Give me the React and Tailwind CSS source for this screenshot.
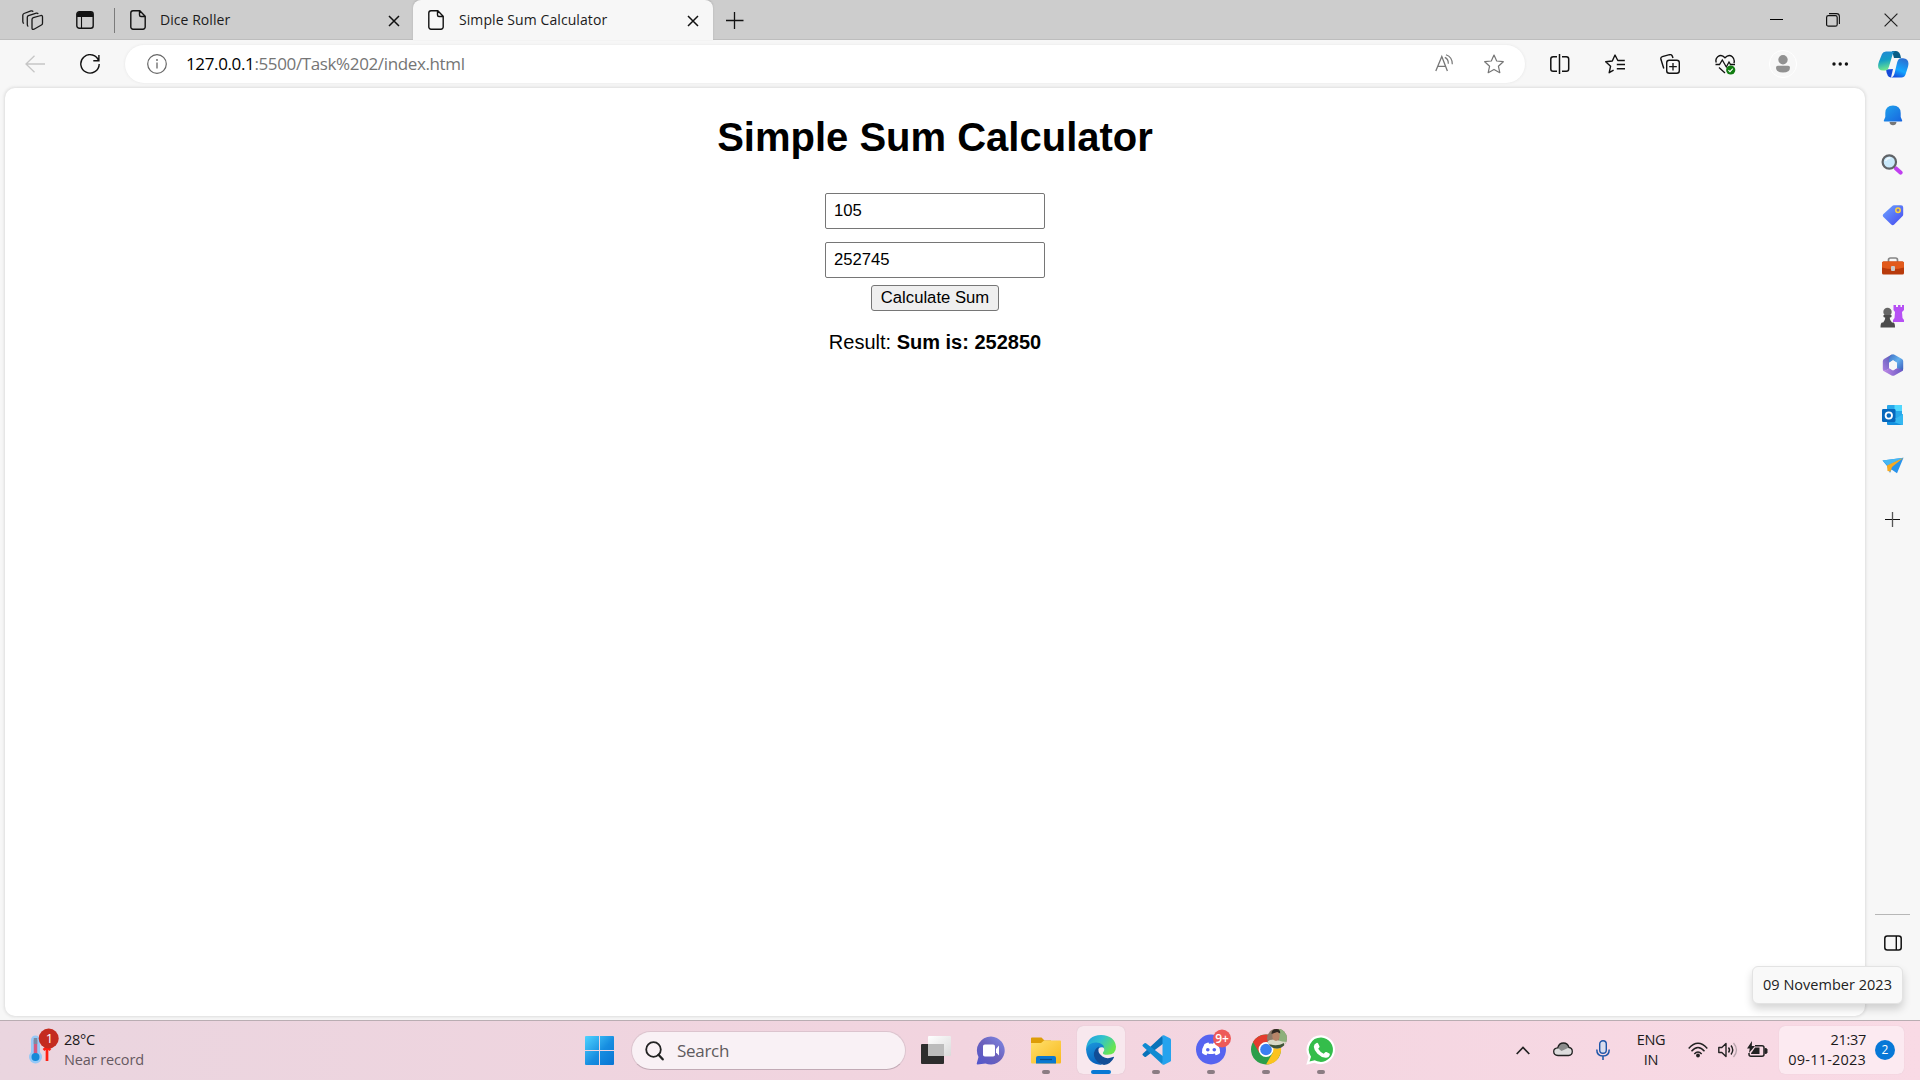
import React from "react";

/* An icon whose drawing space starts at (x, y) and is w by h pixels. */
function Icon({ box, className = "", children }) {
  const [, , w, h] = box.split(" ");
  return (
    <svg
      viewBox={box}
      width={w}
      height={h}
      fill="none"
      stroke="none"
      className={"block shrink-0 " + className}
    >
      {children}
    </svg>
  );
}

const ui = "font-['Open_Sans','Noto_Sans',sans-serif]";

function DocIcon({ className }) {
  return (
    <Icon box="0 0 16 20" className={className}>
      <path
        d="M3 .8h6.8L15.2 6.200V17a2.200 2.200 0 0 1-2.200 2.200H3A2.200 2.200 0 0 1 .8 17V3A2.200 2.200 0 0 1 3 .8zM9.500 1v4a1.500 1.500 0 0 0 1.500 1.500h4"
        stroke="#111"
        strokeWidth="1.4"
      />
    </Icon>
  );
}

function CloseIcon({ className }) {
  return (
    <Icon box="0 0 12 12" className={className}>
      <path d="M1 1l10 10M11 1L1 11" stroke="#111" strokeWidth="1.5" />
    </Icon>
  );
}

function TabBar() {
  return (
    <div className={"flex h-10 w-full shrink-0 items-center bg-[#cdcdcd] shadow-[inset_0_-1px_0_#bdbdbd] " + ui}>
      <Icon box="0 0 22 20" className="ml-[22px]">
        <g stroke="#1a1a1a" strokeWidth="1.3" strokeLinejoin="round">
          <path d="M11.300 7.700l7.700-2.200q1.500-.3 1.500 1.300v6.500q0 1.200-1.100 1.700l-7.400 4.200q-2 .8-2-.9V9.500q0-1.300 1.300-1.800z" />
          <path d="M6.300 16.500q-1-.5-1-2V7.300q0-1.300 1.200-1.700l7.800-2.500q1.300-.3 1.900.8" />
          <path d="M2 13.500q-1.200-.4-1.200-2V5.200Q.8 4 2 3.500L9 .9q1.500-.4 2.200.7" />
        </g>
      </Icon>
      <Icon box="0 0 18 18" className="ml-8">
        <rect x=".8" y=".8" width="16.400" height="16.400" rx="2.500" stroke="#111" strokeWidth="1.4" />
        <path d="M1 6V3.200Q1 1 3.200 1h11.600Q17 1 17 3.200V6z" fill="#111" />
        <path d="M5.500 6v11" stroke="#111" strokeWidth="1.1" />
      </Icon>
      <div className="ml-5 h-[25px] w-px bg-[#7b7b7b]" />
      <DocIcon className="ml-[15px]" />
      <span className="mb-[2px] ml-[14px] w-[228px] text-[14px] tracking-[0.05px] whitespace-nowrap text-[#1b1b1b]">
        Dice Roller
      </span>
      <CloseIcon className="mt-[1px]" />
      <div className="ml-[13px] flex h-10 w-[300px] items-center rounded-t-lg bg-[#f7f7f7] shadow-[0_-1px_2px_#b0b0b0]">
        <DocIcon className="ml-[15px]" />
        <span className="mb-[2px] ml-[15px] w-[228px] text-[14px] tracking-[0.08px] whitespace-nowrap text-[#1b1b1b]">
          Simple Sum Calculator
        </span>
        <CloseIcon className="mt-[1px]" />
      </div>
      <Icon box="0 0 18 18" className="mb-px ml-[13px]">
        <path d="M0 9.500h17.500M8.500 1v17" stroke="#111" strokeWidth="1.3" />
      </Icon>
      <div className="mb-px ml-auto flex items-center pr-[22px]">
        <div className="mr-[43px] h-px w-[13px] bg-black" />
        <Icon box="0 0 14 14">
          <rect x=".6" y="2.600" width="10.600" height="10.600" rx="1.800" stroke="#111" strokeWidth="1.2" />
          <path d="M3 .6h7.500a2.900 2.900 0 0 1 2.900 2.900V11" stroke="#111" strokeWidth="1.1" />
        </Icon>
        <Icon box="0 0 14 14" className="ml-11">
          <path d="M.6.6l12.800 12.800M13.400.6L.6 13.400" stroke="#222" strokeWidth="1.2" />
        </Icon>
      </div>
    </div>
  );
}

const star = "M10 1l2.700 6 6.600.7-4.900 4.500 1.400 6.500L10 15.400l-5.800 3.300 1.400-6.500L.7 7.700 7.300 7z";

function Toolbar() {
  return (
    <div className={"flex h-12 w-full shrink-0 items-center " + ui}>
      <Icon box="0 0 20 18" className="mb-px ml-[25px]">
        <path d="M9.500.8L1 9l8.500 8.200M1 9h19" stroke="#c6c6c6" strokeWidth="1.3" />
      </Icon>
      <Icon box="0 0 20 20" className="ml-[35px]">
        <path d="M18.800 7.200A9.200 9.200 0 1 0 19.200 10M18.900 1v5.700h-5.600" stroke="#111" strokeWidth="1.400" />
      </Icon>
      <div className="ml-[25px] flex h-[38px] w-[1400px] items-center rounded-full bg-white shadow-[0_0_3px_#e4e4e4]">
        <Icon box="0 0 20 20" className="ml-[22px]">
          <circle cx="10" cy="10" r="9.300" stroke="#666" strokeWidth="1.200" />
          <path d="M10 8.500v6" stroke="#666" strokeWidth="1.300" />
          <circle cx="10" cy="6" r=".9" fill="#666" />
        </Icon>
        <span className="mb-px ml-[19px] text-[17px] tracking-[-0.37px] whitespace-nowrap text-[#757575]">
          <span className="text-black">127.0.0.1</span>:5500/Task%202/index.html
        </span>
        <Icon box="0 0 20 20" className="ml-auto">
          <path d="M.8 17L6.800 2.500 12.400 17M2.700 12.300h8" stroke="#777" strokeWidth="1.300" />
          <path d="M9.800 3.400q3.700 1.600 3.500 6.300M11 .8q6.400 2.300 6.300 9.500" stroke="#777" strokeWidth="1.200" />
        </Icon>
        <Icon box="0 0 20 20" className="mr-[21px] ml-[29px]">
          <path d={star} stroke="#757575" strokeWidth="1.200" strokeLinejoin="round" />
        </Icon>
      </div>
      <Icon box="0 0 20 20" className="ml-[25px]">
        <path d="M7 2.700H3.200Q.8 2.700.8 5v10q0 2.300 2.400 2.300H7M12 2.700h4.300q2.400 0 2.400 2.300v10q0 2.300-2.400 2.300H12M9.500 0v20" stroke="#111" strokeWidth="1.500" />
      </Icon>
      <Icon box="0 0 21 20" className="ml-[35px]">
        <path d="M19.800 6.500h-7L10 1 7.300 7 .7 7.700l4.900 4.500-1.400 6.500 4.400-2.500M11.800 10.500h8.200M11.800 14.800h8.200" stroke="#111" strokeWidth="1.400" strokeLinejoin="round" />
      </Icon>
      <Icon box="0 0 20 20" className="ml-[34px]">
        <path d="M3.800 14.500L.9 5.300Q.4 3.300 2.300 2.700L9.500.7q2-.4 2.800 1.400l.7 2" stroke="#111" strokeWidth="1.400" />
        <rect x="6.700" y="6.200" width="12.600" height="13" rx="2.500" stroke="#111" strokeWidth="1.400" />
        <path d="M13 9v7.500M9.200 12.700h7.600" stroke="#111" strokeWidth="1.300" />
      </Icon>
      <Icon box="0 0 21 21" className="ml-[35px]">
        <path d="M1.300 8.500Q0 5 2.700 2.700 6.500-.2 10 3.700q3.800-4 7.300-1Q20 5 19 9.200" stroke="#111" strokeWidth="1.400" />
        <path d="M.5 10.500h4L7.300 6l4 7 2.700-5 1.500 2.500H20M4 13.500l6 5.500" stroke="#111" strokeWidth="1.300" />
        <circle cx="15.700" cy="16" r="4.600" fill="#107c10" />
        <path d="M13.400 16.200l1.600 1.500 2.800-3" stroke="white" strokeWidth="1.100" />
      </Icon>
      <Icon box="0 0 28 28" className="ml-[33px]">
        <circle cx="14" cy="14" r="13.600" fill="#f7f7f7" stroke="white" strokeWidth="1" />
        <circle cx="14" cy="9.700" r="4.700" fill="#919191" />
        <path d="M7 17.500q0-1.800 1.800-1.800h10.400q1.800 0 1.800 1.800 0 5-7 5t-7-5z" fill="#919191" />
      </Icon>
      <Icon box="0 0 17 4" className="ml-[35px]">
        <g fill="#111">
          <circle cx="2" cy="2" r="1.700" />
          <circle cx="8.200" cy="2" r="1.700" />
          <circle cx="14.400" cy="2" r="1.700" />
        </g>
      </Icon>
      <Icon box="0 0 31 27" className="ml-[29px]">
        <defs>
          <linearGradient id="cpA" x1="0" y1="0" x2=".2" y2="1">
            <stop offset="0" stopColor="#2387d5" />
            <stop offset=".5" stopColor="#149ec6" />
            <stop offset="1" stopColor="#6ce58f" />
          </linearGradient>
          <linearGradient id="cpB" x1=".7" y1="0" x2=".3" y2="1">
            <stop offset="0" stopColor="#2d6fd0" />
            <stop offset=".6" stopColor="#14a7ff" />
            <stop offset="1" stopColor="#154ddd" />
          </linearGradient>
        </defs>
        <path d="M14 0h4q4 0 5 7h-7z" fill="#075d86" />
        <path d="M8 18.500l7-.5-2 8.500q-4 0-5-8z" fill="#164bd8" />
        <path d="M8 .5h10q-3 0-4 5l-3 10q-1 4-4 4H5q-7-.5-4-9L4 3q1-2.500 4-2.500z" fill="url(#cpA)" />
        <path d="M20 7.300h5q7 .5 5 8.500l-2.500 7.700q-1 3-4 3H12.500q3 0 4-4L19 12q1-4.700 4-4.700z" fill="url(#cpB)" />
      </Icon>
    </div>
  );
}

function Calculator() {
  const field =
    "block h-9 w-[220px] rounded-[2px] border border-[#767676] bg-white px-2 text-[16.67px] text-black outline-none";
  return (
    <main className="ml-[5px] flex h-[928px] w-[1860px] flex-col items-center rounded-[10px] bg-white font-['Liberation_Sans',Arial,sans-serif] text-black shadow-[0_0_3px_1px_#dedede]">
      <h1 className="mt-[26px] text-[40px] leading-[46px] font-bold">Simple Sum Calculator</h1>
      <input className={field + " mt-[33px]"} defaultValue="105" />
      <input className={field + " mt-[13px]"} defaultValue="252745" />
      <button className="mt-[7px] h-[26px] w-32 rounded-[3px] border border-[#767676] bg-[#efefef] pb-px text-[16.67px] leading-[23px] whitespace-nowrap">
        Calculate Sum
      </button>
      <p className="mt-[19px] text-[20px] leading-6">
        Result: <strong>Sum is: 252850</strong>
      </p>
    </main>
  );
}

function Sidebar() {
  return (
    <aside className="flex w-[55px] flex-col items-center">
      <div className="flex h-[403px] flex-col items-center">
        <div className="flex h-[50px] items-center pt-[5px]">
          <Icon box="0 0 20 21">
            <defs>
              <linearGradient id="bell" x1="0" y1="0" x2="1" y2="1">
                <stop stopColor="#20a4ed" />
                <stop offset="1" stopColor="#1764df" />
              </linearGradient>
            </defs>
            <path d="M6.500 17h7q-.5 3.200-3.500 3.200T6.500 17z" fill="#777" />
            <path d="M10 .5q7.500 0 7.700 7.500v4l1.500 3.500q.3 1-.8 1H1.600q-1.100 0-.8-1L2.300 12V8Q2.500.5 10 .5z" fill="url(#bell)" />
          </Icon>
        </div>
        <div className="flex h-[50px] items-center pt-[3px] pr-px">
          <Icon box="0 0 22 21">
            <path d="M15 14.500l4.500 4" stroke="#c03ff0" strokeWidth="4.200" strokeLinecap="round" />
            <circle cx="8.300" cy="8" r="6.700" fill="#c9e8fa" stroke="#606367" strokeWidth="2.200" />
            <path d="M4.500 7Q6 3.800 9.500 4" stroke="#fff" strokeWidth="1.400" opacity=".7" />
          </Icon>
        </div>
        <div className="flex h-[50px] items-center pt-[4px]">
          <Icon box="0 0 22 22">
            <defs>
              <linearGradient id="tag" x1="0" y1="0" x2="1" y2="1">
                <stop stopColor="#6da6ff" />
                <stop offset="1" stopColor="#4547ef" />
              </linearGradient>
            </defs>
            <path d="M12 1.300h7q2.200 0 2.200 2.200v7q0 1-.8 1.800l-8.200 8.200q-1.500 1.400-3 0L1.200 12.700q-1-1.200 0-2.500L10 2.200q.9-.9 2-.9z" fill="url(#tag)" />
            <circle cx="16" cy="6.300" r="2.200" fill="#7b76bd" stroke="#ffd33a" strokeWidth="1.500" />
          </Icon>
        </div>
        <div className="flex h-[51px] items-center pt-[4px]">
          <Icon box="0 0 24 18">
            <path d="M7.500 5V3q0-2 2-2h5q2 0 2 2v2" stroke="#858585" strokeWidth="1.700" />
            <rect x="1" y="4.500" width="22" height="13" rx="1.500" fill="#b83a0b" />
            <path d="M1 6q0-1.500 1.500-1.500h19q1.500 0 1.500 1.500v4.500q-11 3-22 0z" fill="#e25a1b" />
            <rect x="10" y="9" width="4" height="5" rx="1" fill="#c9c9c9" />
          </Icon>
        </div>
        <div className="flex h-[50px] items-center pt-[3px] pr-px">
          <Icon box="0 0 24 24">
            <path d="M13.500 1h2.500v2h2V1h2.500v2h1.500V1H24v5l-2 2 .5 6 1.500 2v2H13v-2l1.500-2 .5-6-1.500-2z" fill="#b650f4" />
            <circle cx="7.500" cy="8" r="4.200" fill="#666" />
            <path d="M3.500 11h8v2l-1.800.7q.2 3 2.300 4.800h1.500q1.500.5 1.500 5H.5q0-4.500 1.500-5H3.200Q5 16.700 5.300 13.700L3.500 13z" fill="#4b4b4b" />
          </Icon>
        </div>
        <div className="flex h-[50px] items-center pt-[2px]">
          <Icon box="0 0 22 22">
            <defs>
              <linearGradient id="msA" x1="1" y1="0" x2="0" y2="1">
                <stop stopColor="#4a55b0" />
                <stop offset="1" stopColor="#a97fe0" />
              </linearGradient>
              <linearGradient id="msB" x1="0" y1="0" x2="1" y2="1">
                <stop stopColor="#3f6fc4" />
                <stop offset=".5" stopColor="#63b1ee" />
                <stop offset="1" stopColor="#3a55b8" />
              </linearGradient>
              <linearGradient id="msC" x1="0" y1="0" x2="1" y2="0">
                <stop stopColor="#c08ae6" />
                <stop offset="1" stopColor="#6a58c4" />
              </linearGradient>
            </defs>
            <path d="M9.700.6L2 5Q.8 5.800.8 7.200v8q0 1.400 1.400 1.800L7 15V9l5-4z" fill="url(#msA)" />
            <path d="M9.500.7q1.500-.8 3 0L20 5q1.200.8 1.200 2.200V15q0 1.400-1.200 2.200L15 14V9l-4-2.800-4 2.600Q6.500 3 9.500.7z" fill="url(#msB)" />
            <path d="M1 15.500q3 2.300 6-1.500l4 2.300 4-2.300 5.800 2q-.3.800-.9 1.200l-7.500 4.200q-1.400.8-2.800 0L2 17.300Q1 16.700 1 15.500z" fill="url(#msC)" />
            <path d="M11 6.200L15 8.700v5.200l-4 2.500-4-2.500V8.700z" fill="#f7f7f7" />
          </Icon>
        </div>
        <div className="flex h-[50px] items-center pt-[2px]">
          <Icon box="0 0 22 22">
            <rect x="5" y="1" width="15" height="13" rx="1" fill="#28a8ea" />
            <path d="M12.500 1H19q1 0 1 1v5h-7.500z" fill="#50d9ff" />
            <path d="M5 7h7v7H5z" fill="#0364b8" />
            <path d="M5 10l8 5 8-5v10q0 1-1 1H6q-1 0-1-1z" fill="#1490df" />
            <path d="M21 10L9 17l11 4q1 0 1-1z" fill="#35b8f1" />
            <rect x="0" y="5" width="13.500" height="13" rx="1.200" fill="#0768bd" />
            <circle cx="6.800" cy="11.500" r="3.200" stroke="white" strokeWidth="1.800" />
          </Icon>
        </div>
        <div className="flex h-[50px] items-center pt-[2px]">
          <Icon box="0 0 22 17">
            <path d="M.5 3.500L21.500.7 15 16.300 9.500 12.500 8 16 5 9z" fill="#2994ec" />
            <path d="M.5 3.500L21.500.7 5.500 8.500z" fill="#48b8f3" />
            <path d="M21.500.7L5 8.500 5.500 14l3 .5L10 10z" fill="#f7aa22" />
          </Icon>
        </div>
      </div>
      <Icon box="0 0 15 15" className="mt-[21px] mr-px">
        <path d="M0 7.500h15" stroke="#111" strokeWidth="1" />
        <path d="M7.500 0v15" stroke="#555" strokeWidth="1.300" />
      </Icon>
      <div className="mt-[387px] h-px w-[35px] bg-[#b7b7b7]" />
      <Icon box="0 0 18 16" className="mt-5">
        <rect x=".8" y="1" width="16.400" height="14" rx="2.500" stroke="#111" strokeWidth="1.500" />
        <path d="M12.300 1v14" stroke="#111" strokeWidth="1.400" />
      </Icon>
    </aside>
  );
}

function AppButton({ active, running, children }) {
  return (
    <div
      className={
        "relative flex h-12 w-12 shrink-0 items-center justify-center rounded-md " +
        (active ? "bg-[#f8e8ee] shadow-[0_0_1px_#cbb5bf]" : "")
      }
    >
      {children}
      {running && (
        <div
          className={
            "absolute bottom-0 left-1/2 h-1 -translate-x-1/2 rounded-full " +
            (active ? "w-5 bg-[#0878d4]" : "w-2 bg-[#8b7c83]")
          }
        />
      )}
    </div>
  );
}

function Taskbar() {
  return (
    <footer
      className={
        "flex h-[60px] w-full shrink-0 items-center border-t border-[#b9adb2] bg-linear-to-r from-[#ead5df] via-[#f2d4df] to-[#f9dae5] pb-px " +
        ui
      }
    >
      <Icon box="0 0 32 36" className="mb-[8px] ml-[28px]">
        <path d="M7.500 12v15" stroke="#96c9f7" strokeWidth="9" strokeLinecap="round" />
        <circle cx="7.500" cy="29" r="6.500" fill="#96c9f7" />
        <path d="M7.500 12v15" stroke="#d5597f" strokeWidth="3.500" />
        <path d="M7.500 10v6" stroke="#788ba4" strokeWidth="3.500" />
        <circle cx="7.500" cy="29" r="4" fill="#148ad8" />
        <path d="M19 33V20M15.500 22l3.500-3 3.500 3" stroke="#ff2014" strokeWidth="2.700" />
        <circle cx="20.700" cy="10.500" r="10" fill="#c42b1f" />
        <text x="21.500" y="15.300" textAnchor="middle" fill="white" fontSize="13" fontFamily="Open Sans">1</text>
      </Icon>
      <div className="mt-[-1px] ml-[4px] w-[521px] text-[14.500px] leading-5 whitespace-nowrap">
        <div className="tracking-[-0.3px] text-[#1c1a1b]">28°C</div>
        <div className="tracking-[-0.12px] text-[#66595f]">Near record</div>
      </div>
      <Icon box="0 0 29 29" className="mt-px">
        <defs>
          <linearGradient id="win" x1="0" y1="0" x2="29" y2="29" gradientUnits="userSpaceOnUse">
            <stop stopColor="#4fd3ff" />
            <stop offset=".55" stopColor="#168de0" />
            <stop offset="1" stopColor="#0874d3" />
          </linearGradient>
        </defs>
        <path d="M1 0h13v14H0V1q0-1 1-1zM15 0h13q1 0 1 1v13H15zM0 15h14v14H1q-1 0-1-1zM15 15h14v13q0 1-1 1H15z" fill="url(#win)" />
      </Icon>
      <div className="mt-px ml-[17px] flex h-[39px] w-[275px] items-center rounded-full border border-[#dcc4ce] border-b-[#c2aab5] bg-[#f9f1f5]">
        <Icon box="0 0 19 20" className="ml-[13px]">
          <circle cx="8.500" cy="8.500" r="7.300" stroke="#222" strokeWidth="1.800" />
          <path d="M13.500 13.800l4.200 4.500" stroke="#222" strokeWidth="2.300" strokeLinecap="round" />
        </Icon>
        <span className="ml-[13px] text-[17px] tracking-[-0.3px] text-[#5f5b5d]">Search</span>
      </div>
      <div className="ml-[6px] flex items-center gap-[7px]">
        <AppButton>
          <Icon box="0 0 30 29">
            <defs>
              <linearGradient id="tv" x1="0" y1="0" x2="1" y2="1">
                <stop stopColor="#fff" />
                <stop offset="1" stopColor="#dadada" />
              </linearGradient>
            </defs>
            <rect x="0" y="8" width="23" height="20" rx="1" fill="#2d2d2d" />
            <rect x="7" y="0" width="23" height="20" rx="1" fill="url(#tv)" />
            <path d="M7 8h16v12H8q-1 0-1-1z" fill="#bcbcbc" />
          </Icon>
        </AppButton>
        <AppButton>
          <Icon box="0 0 29 29" className="mr-px">
            <defs>
              <linearGradient id="chat" x1="1" y1="0" x2="0" y2="1">
                <stop stopColor="#7f8ce8" />
                <stop offset=".5" stopColor="#6c61bb" />
                <stop offset="1" stopColor="#5156cc" />
              </linearGradient>
            </defs>
            <path d="M15 .5a14 14 0 1 1-5.500 27L1.500 28.500q-1 0-.7-1.200L2.500 21A14 14 0 0 1 15 .5z" fill="url(#chat)" />
            <rect x="7" y="8.500" width="12" height="12" rx="1.800" fill="white" />
            <path d="M20 13l3-3.500v10L20 16.500z" fill="white" />
          </Icon>
        </AppButton>
        <AppButton running>
          <Icon box="0 0 30 27">
            <defs>
              <linearGradient id="fol" x1="0" y1="0" x2="1" y2="1">
                <stop stopColor="#ffe06d" />
                <stop offset="1" stopColor="#f9b91d" />
              </linearGradient>
            </defs>
            <path d="M1 .5h9.500l3 3H20V8H0V1.500Q0 .5 1 .5z" fill="#dd9d08" />
            <path d="M0 6h10l3-2.500h16q1 0 1 1V25q0 1.500-1 1.500H1Q0 26.500 0 25z" fill="url(#fol)" />
            <path d="M5 26.500V21q0-2 2-2h16q2 0 2 2v5.500z" fill="#0b78d0" />
            <path d="M9 22.500h12" stroke="#0b4d88" strokeWidth="1.200" />
          </Icon>
        </AppButton>
        <AppButton running active>
          <Icon box="0 0 30 30">
            <defs>
              <linearGradient id="edA" x1="0" y1="0" x2="1" y2=".5">
                <stop stopColor="#1f9be0" />
                <stop offset=".5" stopColor="#31c2cd" />
                <stop offset="1" stopColor="#69e550" />
              </linearGradient>
              <linearGradient id="edB" x1="0" y1="0" x2=".3" y2="1">
                <stop stopColor="#1c98dc" />
                <stop offset="1" stopColor="#0963bd" />
              </linearGradient>
            </defs>
            <path d="M0 14Q1.300 0 15 0q14 .8 15 11.800 0 8-8.500 8-5.500 0-4.500-2.300 3-3.500-1-6Q7 6.500 0 14z" fill="url(#edA)" />
            <path d="M0 14Q3 7 10.500 7.500q7 .8 7.500 5-6-1.500-7 5-.5 8 5 12.400Q1 29.500 0 14z" fill="url(#edB)" />
            <path d="M13 11.500q-6 3-5 9.500 2 7 10 9 7-1 10-7.500 0-1-1-.5-6 2.500-10.500-.5-6-4-3.500-10z" fill="#124d96" />
          </Icon>
        </AppButton>
        <AppButton running>
          <Icon box="0 0 30 30">
            <path d="M21.500.5L2 18.500q-1.300 1 0 2l1.500 1.300q.7.500 1.500 0L23 8z" fill="#0872b9" />
            <path d="M21.500 29.500L2 11.500q-1.300-1 0-2l1.500-1.300q.7-.5 1.500 0L23 22z" fill="#108bd2" />
            <path d="M21.500.5q.8-.5 1.500-.2l6 2.900q1 .5 1 1.600v20.400q0 1.100-1 1.600l-6 2.900q-.7.300-1.500-.2z" fill="#26a3ee" />
          </Icon>
        </AppButton>
        <AppButton running>
          <Icon box="0 0 36 36" className="mb-[6px] ml-[6px]">
            <circle cx="15" cy="20.500" r="15" fill="#5664f0" />
            <path d="M8.500 15q3-1.800 4-1.500l.6 1.200q2-.3 3.900 0l.6-1.200q1.500 0 4 1.500 2.700 4.500 2.500 9-2 2-4.400 2.300l-1-1.800q-3.700 1-7.300 0l-1 1.800Q8 26 6 24q-.3-4.500 2.500-9z" fill="white" />
            <circle cx="11.800" cy="20.800" r="1.800" fill="#5664f0" />
            <circle cx="18.300" cy="20.800" r="1.800" fill="#5664f0" />
            <circle cx="26" cy="9.500" r="9" fill="#ed5a58" />
            <text x="26" y="13.800" textAnchor="middle" fill="white" fontSize="12" fontWeight="600" fontFamily="Open Sans">9+</text>
          </Icon>
        </AppButton>
        <AppButton running>
          <Icon box="0 0 36 36" className="mb-[6px] ml-[6px]">
            <circle cx="15" cy="20.500" r="15" fill="#2b9e4b" />
            <path d="M2 13A15 15 0 0 1 28 13H15l-6.500 11.200z" fill="#e33b2e" />
            <path d="M28 13A15 15 0 0 1 15 35.500L21.500 24.200 21.500 13z" fill="#fcc31e" />
            <circle cx="15" cy="20.500" r="7.400" fill="white" />
            <circle cx="15" cy="20.500" r="5.800" fill="#3a7ff0" />
            <clipPath id="av">
              <circle cx="26" cy="9.500" r="10" />
            </clipPath>
            <g clipPath="url(#av)">
              <path d="M16-1h20v21H16z" fill="#8c7a69" />
              <path d="M28 0h9v13h-9z" fill="#8db07b" />
              <path d="M15 14q5-5 11-3t11 2v8H15z" fill="#d9d9c6" />
              <ellipse cx="25" cy="7" rx="3.700" ry="5" fill="#b78468" />
              <path d="M20.500 5q0-5 5-5 4 0 3.700 4.500l-3-1.500z" fill="#302823" />
              <path d="M18 15q8 3 15-1v4q-8 4-14 1z" fill="#3f5539" />
            </g>
          </Icon>
        </AppButton>
        <AppButton running>
          <Icon box="0 0 30 30">
            <path d="M15.200.2A14.500 14.500 0 1 1 8.300 27.800L.3 29.700 2.500 22A14.500 14.500 0 0 1 15.200.2z" fill="white" />
            <path d="M15.200 2.500A12.200 12.200 0 1 1 8.700 25.300L3.500 26.600 5 21.700A12.200 12.200 0 0 1 15.200 2.500z" fill="#34bd4b" />
            <path d="M10.500 8q.8-.5 1.500.2l1.500 3q.3.700-.3 1.400l-1 1.200q2 3.500 5.500 5l1.500-1.600q.5-.5 1.200-.2l3 1.500q.6.300.4 1.200-.8 3.300-4.300 3-4.500-.5-8-4t-3.700-7q0-2.300 2.700-3.700z" fill="white" />
          </Icon>
        </AppButton>
      </div>
      <div className="ml-auto flex items-center">
        <Icon box="0 0 14 9">
          <path d="M.7 8L7 1.500 13.300 8" stroke="#222" strokeWidth="1.700" />
        </Icon>
        <Icon box="0 0 20 15" className="mb-px ml-[23px]">
          <path d="M5 13.500q-4.300-.3-4.300-4 0-3.300 4-3.700Q6 1 10.500 1q4.200 0 5.500 4.500 3.300.5 3.300 4 0 3.700-3.800 4z" fill="#ddd" />
          <path d="M4.700 5.800Q6 1 10.500 1q4.200 0 5.500 4.500L8.500 9 4.700 6z" fill="#8b8b8b" />
          <path d="M5 13.500q-4.300-.3-4.300-4 0-3.300 4-3.700Q6 1 10.500 1q4.200 0 5.500 4.500 3.300.5 3.300 4 0 3.700-3.800 4z" stroke="#222" strokeWidth="1.300" />
        </Icon>
        <Icon box="0 0 14 20" className="ml-[23px]">
          <rect x="3.700" y=".8" width="6.600" height="12.500" rx="3.300" fill="#d9dced" stroke="#1d55a8" strokeWidth="1.400" />
          <path d="M.8 9.500q0 6.500 6.200 6.500t6.200-6.500M7 16v4" stroke="#1d55a8" strokeWidth="1.500" />
        </Icon>
        <div className="ml-[23px] w-9 text-center text-[14.500px] leading-5 tracking-[-0.3px] text-[#1c1a1b]">
          <div>ENG</div>
          <div>IN</div>
        </div>
        <Icon box="0 0 20 16" className="ml-[19px]">
          <path d="M.7 6.500q9.300-10.500 18.600 0M3.500 9.300q6.500-7.500 13 0M6.300 12q3.700-4 7.400 0" stroke="#222" strokeWidth="1.400" />
          <circle cx="10" cy="13.500" r="1.900" fill="#222" />
        </Icon>
        <Icon box="0 0 21 18" className="ml-[10px]">
          <path d="M.8 6.500h3L8 2.500v13l-4.200-4h-3zM10.500 6.500q2 2.500 0 5M13 4.500q3.500 4.500 0 9" stroke="#222" strokeWidth="1.400" strokeLinejoin="round" />
          <path d="M15.500 2q6 7 0 14" stroke="#b7a3ac" strokeWidth="1.300" />
        </Icon>
        <Icon box="0 0 21 17" className="mb-[2px] ml-[8px]">
          <path d="M8 4.800h7q2 0 2 2v6.400q0 2-2 2H4q-2 0-2-2V12" stroke="#222" strokeWidth="1.500" />
          <path d="M18 7.500l2 .5v4l-2 .5z" fill="#222" stroke="#222" />
          <path d="M8 6.500h4.500V13H4q0-1.500 1-2zM5 0L0 7.500h2.700L2 12l6-7H4.800z" fill="#222" />
        </Icon>
        <div className="mr-4 ml-[11px] flex h-12 w-[125px] items-center justify-end rounded-md bg-[#fceaf1] shadow-[0_0_1px_#dcc2cd]">
          <div className="text-right text-[14.500px] leading-5 whitespace-nowrap text-[#1c1a1b]">
            <div className="tracking-[-0.3px]">21:37</div>
            <div className="tracking-[0.2px]">09-11-2023</div>
          </div>
          <div className="mr-[9px] ml-[9px] flex h-5 w-5 items-center justify-center rounded-full bg-[#0778d7] text-[12px] text-white">
            2
          </div>
        </div>
      </div>
    </footer>
  );
}

export default function App() {
  return (
    <div className="relative flex h-[1080px] w-[1920px] flex-col overflow-hidden bg-[#f7f7f7]">
      <TabBar />
      <Toolbar />
      <div className="flex h-[932px] shrink-0">
        <Calculator />
        <Sidebar />
      </div>
      <Taskbar />
      <div
        className={
          "absolute top-[966px] left-[1752px] flex h-[38px] w-[151px] items-center justify-center rounded-md border border-[#e3e3e3] bg-[#f9f9f9] text-[14.500px] tracking-[0.02px] whitespace-nowrap text-[#222] shadow-[0_5px_8px_#0000002a] " +
          ui
        }
      >
        09 November 2023
      </div>
    </div>
  );
}
